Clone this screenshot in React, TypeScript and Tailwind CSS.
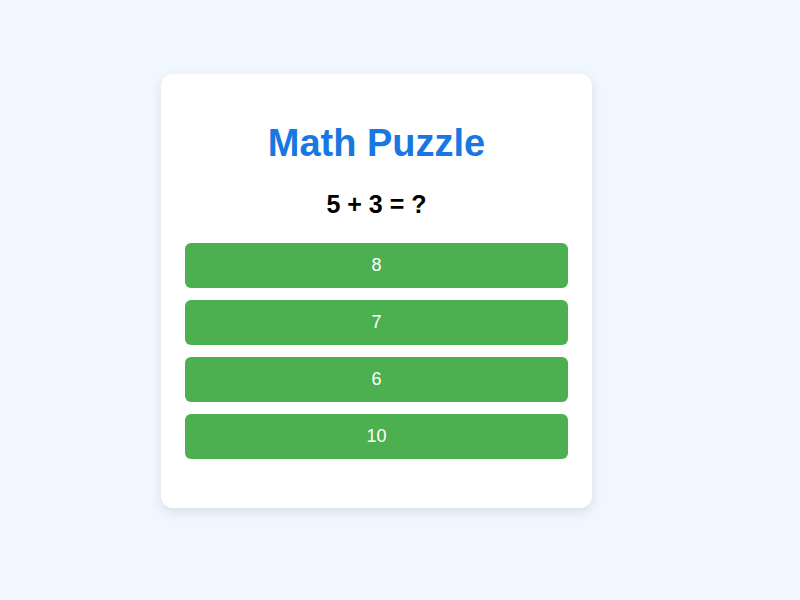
const options = [8, 7, 6, 10];

export default function App() {
  return (
    <div className="min-h-screen bg-[#f0f7ff] pl-[161px] pt-[74px] font-['Liberation_Sans',Arial,sans-serif]">
      {/* Card */}
      <div className="w-[431px] h-[434px] rounded-xl bg-white px-6 pt-[46px] shadow-[0_4px_12px_rgba(0,0,0,0.1)]">
        <h1 className="text-center text-[38px] leading-[46px] font-bold text-[#1877e0]">Math Puzzle</h1>
        <p className="mt-[23px] text-center text-[25px] leading-[30px] font-bold text-black">5 + 3 = ?</p>
        <div className="mt-[24px] flex flex-col gap-3">
          {options.map((n) => (
            <button
              key={n}
              className="h-[45px] w-full rounded-md bg-[#4caf50] text-[18px] text-white"
            >
              {n}
            </button>
          ))}
        </div>
      </div>
    </div>
  );
}
